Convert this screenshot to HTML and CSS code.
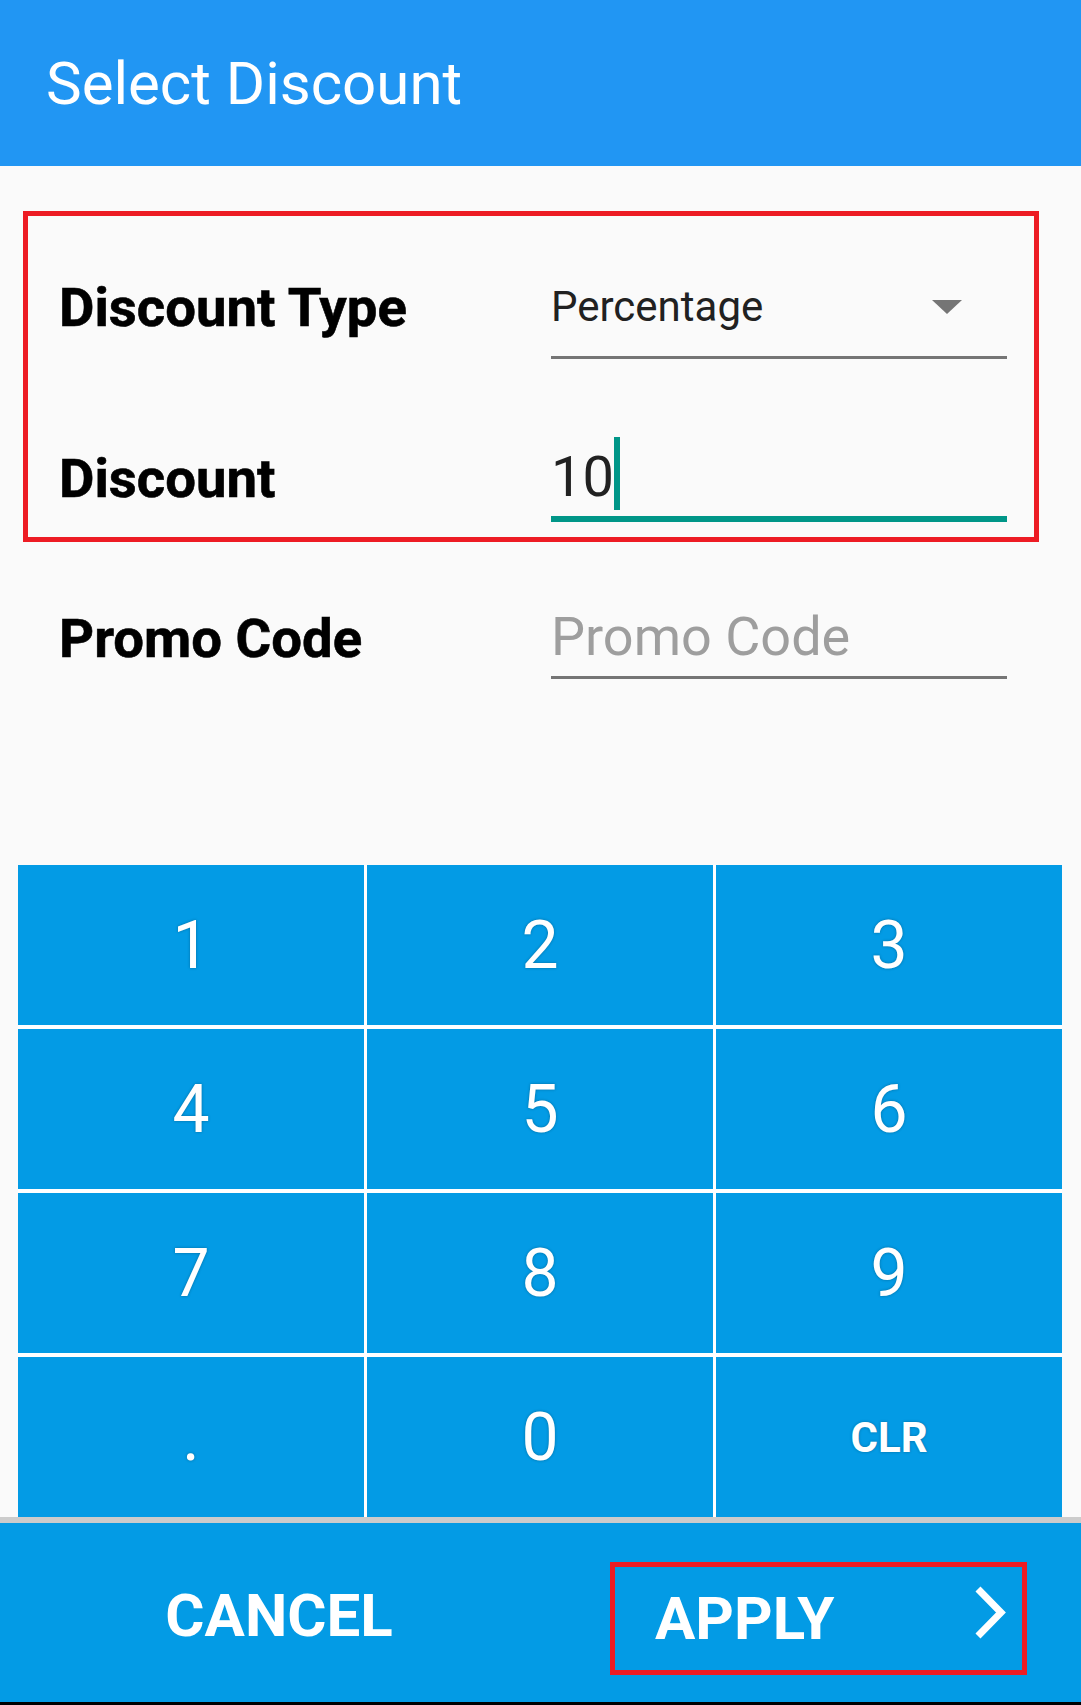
FILE: index.html
```html
<!DOCTYPE html>
<html lang="en">
<head>
  <meta charset="UTF-8">
  <meta name="viewport" content="width=device-width, initial-scale=1.0">
  <title>Select Discount</title>
  <link rel="stylesheet" href="styles.css">
</head>
<body>
  <div class="screen">

    <header class="toolbar">
      <h1 class="title">Select Discount</h1>
    </header>

    <main class="content">
      <div class="form-box">
        <div class="form-row row-type">
          <label class="field-label">Discount Type</label>
          <div class="field spinner">
            <span>Percentage</span>
            <span class="caret"></span>
          </div>
        </div>
        <div class="form-row row-discount">
          <label class="field-label">Discount</label>
          <div class="field input focused"><span>10</span><span class="cursor"></span></div>
        </div>
      </div>

      <div class="form-row row-promo">
        <label class="field-label">Promo Code</label>
        <div class="field input promo">Promo Code</div>
      </div>
    </main>

    <div class="keypad">
      <button class="key">1</button>
      <button class="key">2</button>
      <button class="key">3</button>
      <button class="key">4</button>
      <button class="key">5</button>
      <button class="key">6</button>
      <button class="key">7</button>
      <button class="key">8</button>
      <button class="key">9</button>
      <button class="key">.</button>
      <button class="key">0</button>
      <button class="key key-clr">CLR</button>
    </div>

    <footer class="actions">
      <button class="action cancel">CANCEL</button>
      <button class="action apply">
        <span>APPLY</span>
        <svg class="chevron" width="33" height="53" viewBox="0 0 33 53">
          <polyline points="4,3 27,26.5 4,50" fill="none" stroke="#fff" stroke-width="7" stroke-linejoin="miter" stroke-miterlimit="4"/>
        </svg>
      </button>
    </footer>

  </div>
</body>
</html>
```

FILE: styles.css
```css
* {
  box-sizing: border-box;
}
body {
  margin: 0;
  background: #fafafa;
  font-family: Roboto, "Liberation Sans", sans-serif;
}
.screen {
  display: flex;
  flex-direction: column;
  height: 100vh;
}

/* toolbar */
.toolbar {
  height: 166px;
  flex-shrink: 0;
  display: flex;
  align-items: center;
  padding-left: 46px;
  background: #2196f3;
}
.title {
  margin: 0;
  font-size: 60px;
  font-weight: 400;
  color: #fff;
}

/* form */
.content {
  flex: 1;
}
.form-box {
  margin: 45px 42px 0 23px;
  padding: 64px 0 15px 31px;
  border: 5px solid #ed1c24;
}
.form-row {
  display: grid;
  grid-template-columns: 492px 456px;
  align-items: end;
}
.row-discount {
  margin-top: 78px;
}
.row-promo {
  margin: 65px 0 0 59px;
}
.field-label {
  font-size: 54.5px;
  line-height: 54px;
  font-weight: 700;
  color: #000;
  -webkit-text-stroke: 0.6px #000;
}
.row-type .field-label {
  padding-bottom: 25px;
}
.row-discount .field-label {
  padding-bottom: 17px;
}
.row-promo .field-label {
  padding-bottom: 14px;
}
.field {
  border-bottom: 3px solid #757575;
  color: #212121;
}
.spinner {
  display: flex;
  align-items: center;
  justify-content: space-between;
  font-size: 42px;
  line-height: 50px;
  padding-bottom: 24px;
}
.caret {
  margin-right: 45px;
  border-left: 15px solid transparent;
  border-right: 15px solid transparent;
  border-top: 14px solid #757575;
}
.input {
  font-size: 56px;
  line-height: 60px;
}
.focused {
  padding-bottom: 6px;
  border-bottom: 6px solid #009688;
}
.cursor {
  display: inline-block;
  width: 6px;
  height: 73px;
  vertical-align: -14px;
  background: #009688;
}
.promo {
  font-size: 54px;
  padding-bottom: 9px;
  color: #9e9e9e;
}

/* keypad */
.keypad {
  display: grid;
  grid-template-columns: repeat(3, 346px);
  grid-auto-rows: 160px;
  column-gap: 3px;
  row-gap: 4px;
  width: 1044px;
  margin-left: 18px;
  background: #fff;
}
.key {
  padding: 0;
  border: none;
  background: #039be5;
  color: #fff;
  font-family: inherit;
  font-size: 66px;
  font-weight: 400;
  text-shadow: 0 0 3px rgba(0, 0, 0, 0.3);
}
.key-clr {
  font-size: 42px;
  font-weight: 700;
}

/* bottom actions */
.actions {
  height: 188px;
  flex-shrink: 0;
  display: flex;
  align-items: center;
  padding-top: 12px;
  background: #039be5;
  border-top: 6px solid #cccccc;
  border-bottom: 3px solid #000;
}
.action {
  padding: 0;
  border: none;
  background: none;
  color: #fff;
  font-family: inherit;
  font-size: 60px;
  font-weight: 700;
}
.cancel {
  width: 522px;
  margin-left: 18px;
  padding-bottom: 6px;
  text-align: center;
}
.apply {
  width: 417px;
  height: 113px;
  margin-left: 70px;
  display: flex;
  align-items: center;
  justify-content: space-between;
  padding: 0 15px 0 40px;
  border: 5px solid #ed1c24;
}
.chevron {
  margin-bottom: 12px;
}
```
